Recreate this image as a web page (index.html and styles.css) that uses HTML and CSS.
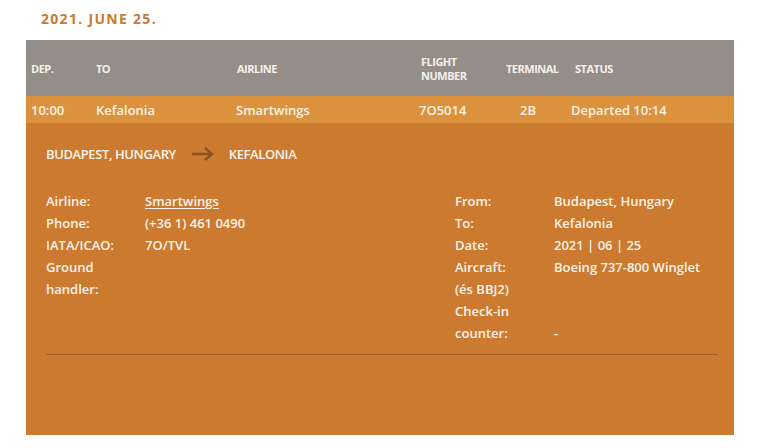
FILE: index.html
```html
<!DOCTYPE html>
<html lang="en">
<head>
<meta charset="utf-8">
<title>Flight details</title>
<link rel="stylesheet" href="styles.css">
</head>
<body>
<div class="page">
  <h2 class="date">2021. JUNE 25.</h2>
  <div class="board">
    <div class="thead">
      <div class="c dep">DEP.</div>
      <div class="c to">TO</div>
      <div class="c airline">AIRLINE</div>
      <div class="c flight">FLIGHT<br>NUMBER</div>
      <div class="c term">TERMINAL</div>
      <div class="c status">STATUS</div>
    </div>
    <div class="trow">
      <div class="c dep">10:00</div>
      <div class="c to">Kefalonia</div>
      <div class="c airline">Smartwings</div>
      <div class="c flight">7O5014</div>
      <div class="c term">2B</div>
      <div class="c status">Departed 10:14</div>
    </div>
    <div class="details">
      <div class="route">
        <span>BUDAPEST, HUNGARY</span>
        <svg class="arrow" width="22" height="14" viewBox="0 0 22 14">
          <path d="M0 7H20M13 1L20 7L13 13" fill="none" stroke="#8c5222" stroke-width="2.4"/>
        </svg>
        <span>KEFALONIA</span>
      </div>
      <div class="info">
        <dl class="col">
          <dt>Airline:</dt><dd><a href="#">Smartwings</a></dd>
          <dt>Phone:</dt><dd>(+36 1) 461 0490</dd>
          <dt>IATA/ICAO:</dt><dd>7O/TVL</dd>
          <dt>Ground<br>handler:</dt><dd></dd>
        </dl>
        <dl class="col">
          <dt>From:</dt><dd>Budapest, Hungary</dd>
          <dt>To:</dt><dd>Kefalonia</dd>
          <dt>Date:</dt><dd>2021 | 06 | 25</dd>
          <dt>Aircraft:<br>(és BBJ2)</dt><dd>Boeing 737-800 Winglet</dd>
          <dt>Check-in<br>counter:</dt><dd class="bottom">-</dd>
        </dl>
      </div>
      <hr class="divider">
    </div>
  </div>
</div>
</body>
</html>
```

FILE: styles.css
```css
* { box-sizing: border-box; }
html, body { margin: 0; padding: 0; background: #fff; }
body {
  font-family: "Open Sans", "Noto Sans", sans-serif;
  font-weight: 600;
  color: #fbf3ea;
}
.page {
  width: 757px;
  padding: 9px 0 0 26px;
}
.date {
  margin: 0 0 12px 15px;
  font-size: 14px;
  line-height: 19px;
  font-weight: 700;
  letter-spacing: 1.3px;
  color: #c97a32;
}
.board { width: 708px; }
.thead, .trow {
  display: grid;
  grid-template-columns: 65px 141px 184px 85px 69px 1fr;
  padding-left: 5px;
  align-items: center;
}
.thead {
  height: 56px;
  background: #958d87;
  font-size: 11px;
  font-weight: 700;
  line-height: 14px;
  letter-spacing: -0.5px;
  color: #f4f0ec;
}
.thead .c { padding-top: 1px; }
.trow {
  height: 27px;
  background: #dc913c;
  font-size: 13px;
  line-height: 16px;
}
.trow .airline { margin-left: -1px; }
.trow .flight { margin-left: -2px; }
.trow .term { padding-left: 14px; }
.trow .status { margin-left: -4px; }
.details {
  background: #cb7a30;
  height: 312px;
  padding: 20px 16px 0 20px;
}
.route {
  display: flex;
  align-items: center;
  font-size: 13px;
  line-height: 22px;
  letter-spacing: -0.4px;
}
.route .arrow { margin: 0 15px 0 16px; }
.info {
  display: grid;
  grid-template-columns: 409px 1fr;
  margin-top: 25px;
  height: 164px;
  font-size: 13px;
  line-height: 22px;
}
.col {
  display: grid;
  grid-template-columns: 99px 1fr;
  align-content: start;
  align-items: start;
  margin: 0;
}
.col dt, .col dd { margin: 0; }
.col dd.bottom { align-self: end; }
.col a { color: inherit; text-decoration: underline; text-underline-offset: 2px; }
.divider {
  margin: 0;
  border: 0;
  border-top: 1px solid #a3602a;
  width: 672px;
}
```
